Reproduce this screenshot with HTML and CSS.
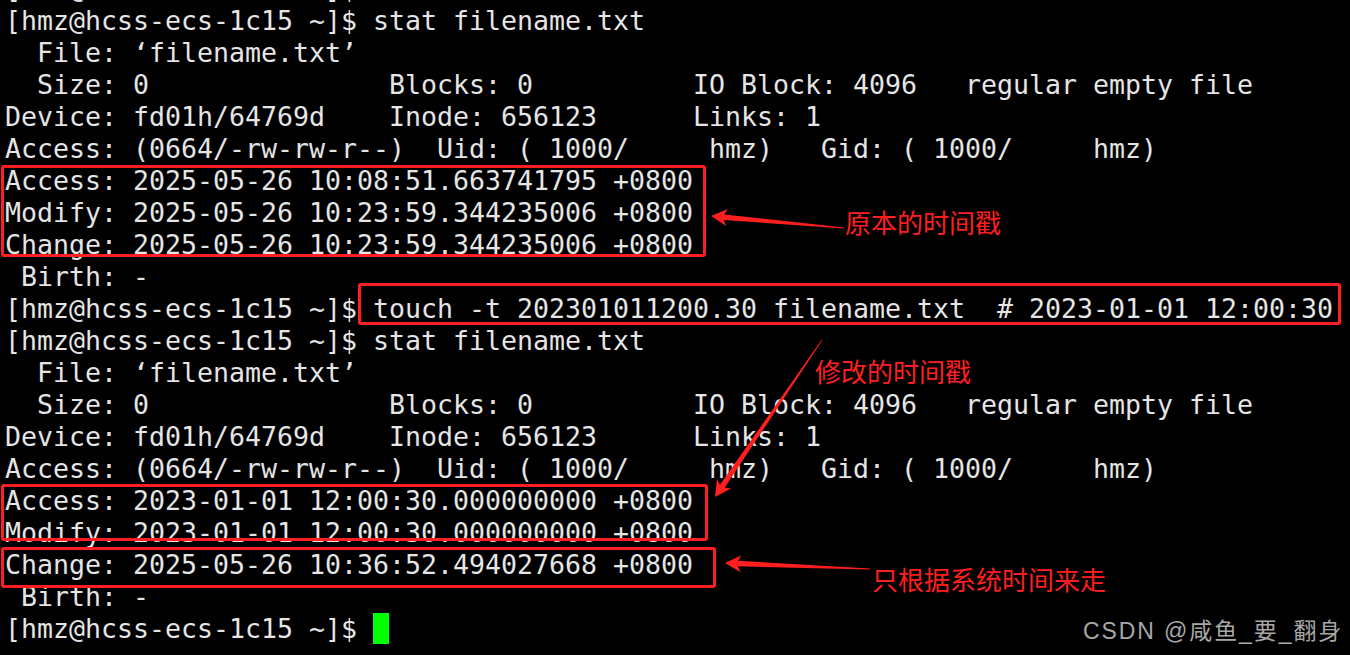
FILE: index.html
```html
<!DOCTYPE html>
<html lang="zh-CN">
<head>
<meta charset="utf-8">
<title>stat filename.txt</title>
<link rel="stylesheet" href="styles.css">
</head>
<body>
<div class="screen">
<pre class="term">[hmz@hcss-ecs-1c15 ~]$
[hmz@hcss-ecs-1c15 ~]$ stat filename.txt
  File: ‘filename.txt’
  Size: 0               Blocks: 0          IO Block: 4096   regular empty file
Device: fd01h/64769d    Inode: 656123      Links: 1
Access: (0664/-rw-rw-r--)  Uid: ( 1000/     hmz)   Gid: ( 1000/     hmz)
Access: 2025-05-26 10:08:51.663741795 +0800
Modify: 2025-05-26 10:23:59.344235006 +0800
Change: 2025-05-26 10:23:59.344235006 +0800
 Birth: -
[hmz@hcss-ecs-1c15 ~]$ touch -t 202301011200.30 filename.txt  # 2023-01-01 12:00:30
[hmz@hcss-ecs-1c15 ~]$ stat filename.txt
  File: ‘filename.txt’
  Size: 0               Blocks: 0          IO Block: 4096   regular empty file
Device: fd01h/64769d    Inode: 656123      Links: 1
Access: (0664/-rw-rw-r--)  Uid: ( 1000/     hmz)   Gid: ( 1000/     hmz)
Access: 2023-01-01 12:00:30.000000000 +0800
Modify: 2023-01-01 12:00:30.000000000 +0800
Change: 2025-05-26 10:36:52.494027668 +0800
 Birth: -
[hmz@hcss-ecs-1c15 ~]$ <span class="cursor"></span></pre>

  <div class="box box-a"></div>
  <div class="box box-b"></div>
  <div class="box box-c"></div>
  <div class="box box-d"></div>

  <svg class="arrows" width="1350" height="655" viewBox="0 0 1350 655" aria-hidden="true">
    <g transform="translate(711 216) rotate(5.16)">
      <polygon points="0,0 16,-8.5 13,-2.8 133.5,-0.4 133.5,0.4 13,2.8 16,8.5"/>
    </g>
    <g transform="translate(715 497) rotate(-55.72)">
      <polygon points="0,0 16,-8.5 13,-2.8 190,-0.4 190,0.4 13,2.8 16,8.5"/>
    </g>
    <g transform="translate(725 563) rotate(2.37)">
      <polygon points="0,0 16,-8.5 13,-2.8 145,-0.4 145,0.4 13,2.8 16,8.5"/>
    </g>
  </svg>

  <div class="label label-1">原本的时间戳</div>
  <div class="label label-2">修改的时间戳</div>
  <div class="label label-3">只根据系统时间来走</div>

  <div class="watermark">CSDN @咸鱼_要_翻身</div>
</div>
</body>
</html>
```

FILE: styles.css
```css
html, body {
  margin: 0;
  padding: 0;
  background: #000;
}

body {
  width: 1350px;
  height: 655px;
  overflow: hidden;
}

.screen {
  position: relative;
  width: 1350px;
  height: 655px;
  overflow: hidden;
  background: #000;
}

.term {
  margin: -27px 0 0 0;
  padding: 0 0 0 5px;
  font-family: "DejaVu Sans Mono", monospace;
  font-size: 26.58px;
  line-height: 32px;
  color: #e5e5e5;
  white-space: pre;
}

.cursor {
  display: inline-block;
  width: 16px;
  height: 31px;
  background: #00ff00;
  vertical-align: top;
}

.box {
  position: absolute;
  box-sizing: border-box;
  border: 3px solid #ff1f1f;
  border-radius: 3px;
}

.box-a { left: 1px;   top: 165px; width: 705px; height: 92px; }
.box-b { left: 358px; top: 283px; width: 983px; height: 42px; }
.box-c { left: 1px;   top: 484px; width: 707px; height: 57px; }
.box-d { left: 1px;   top: 547px; width: 715px; height: 41px; }

.arrows {
  position: absolute;
  left: 0;
  top: 0;
  fill: #ff1f1f;
}

.label {
  position: absolute;
  font-family: "Noto Sans CJK SC", sans-serif;
  font-size: 26px;
  line-height: 1;
  color: #ff1f1f;
  white-space: nowrap;
}

.label-1 { left: 845px; top: 209px; }
.label-2 { left: 815px; top: 358px; }
.label-3 { left: 872px; top: 566px; }

.watermark {
  position: absolute;
  left: 1083px;
  top: 620px;
  font-family: "Liberation Sans", "Noto Sans CJK SC", sans-serif;
  font-size: 23px;
  line-height: 1;
  letter-spacing: 1.9px;
  color: #a8a8a8;
  white-space: nowrap;
}
```
